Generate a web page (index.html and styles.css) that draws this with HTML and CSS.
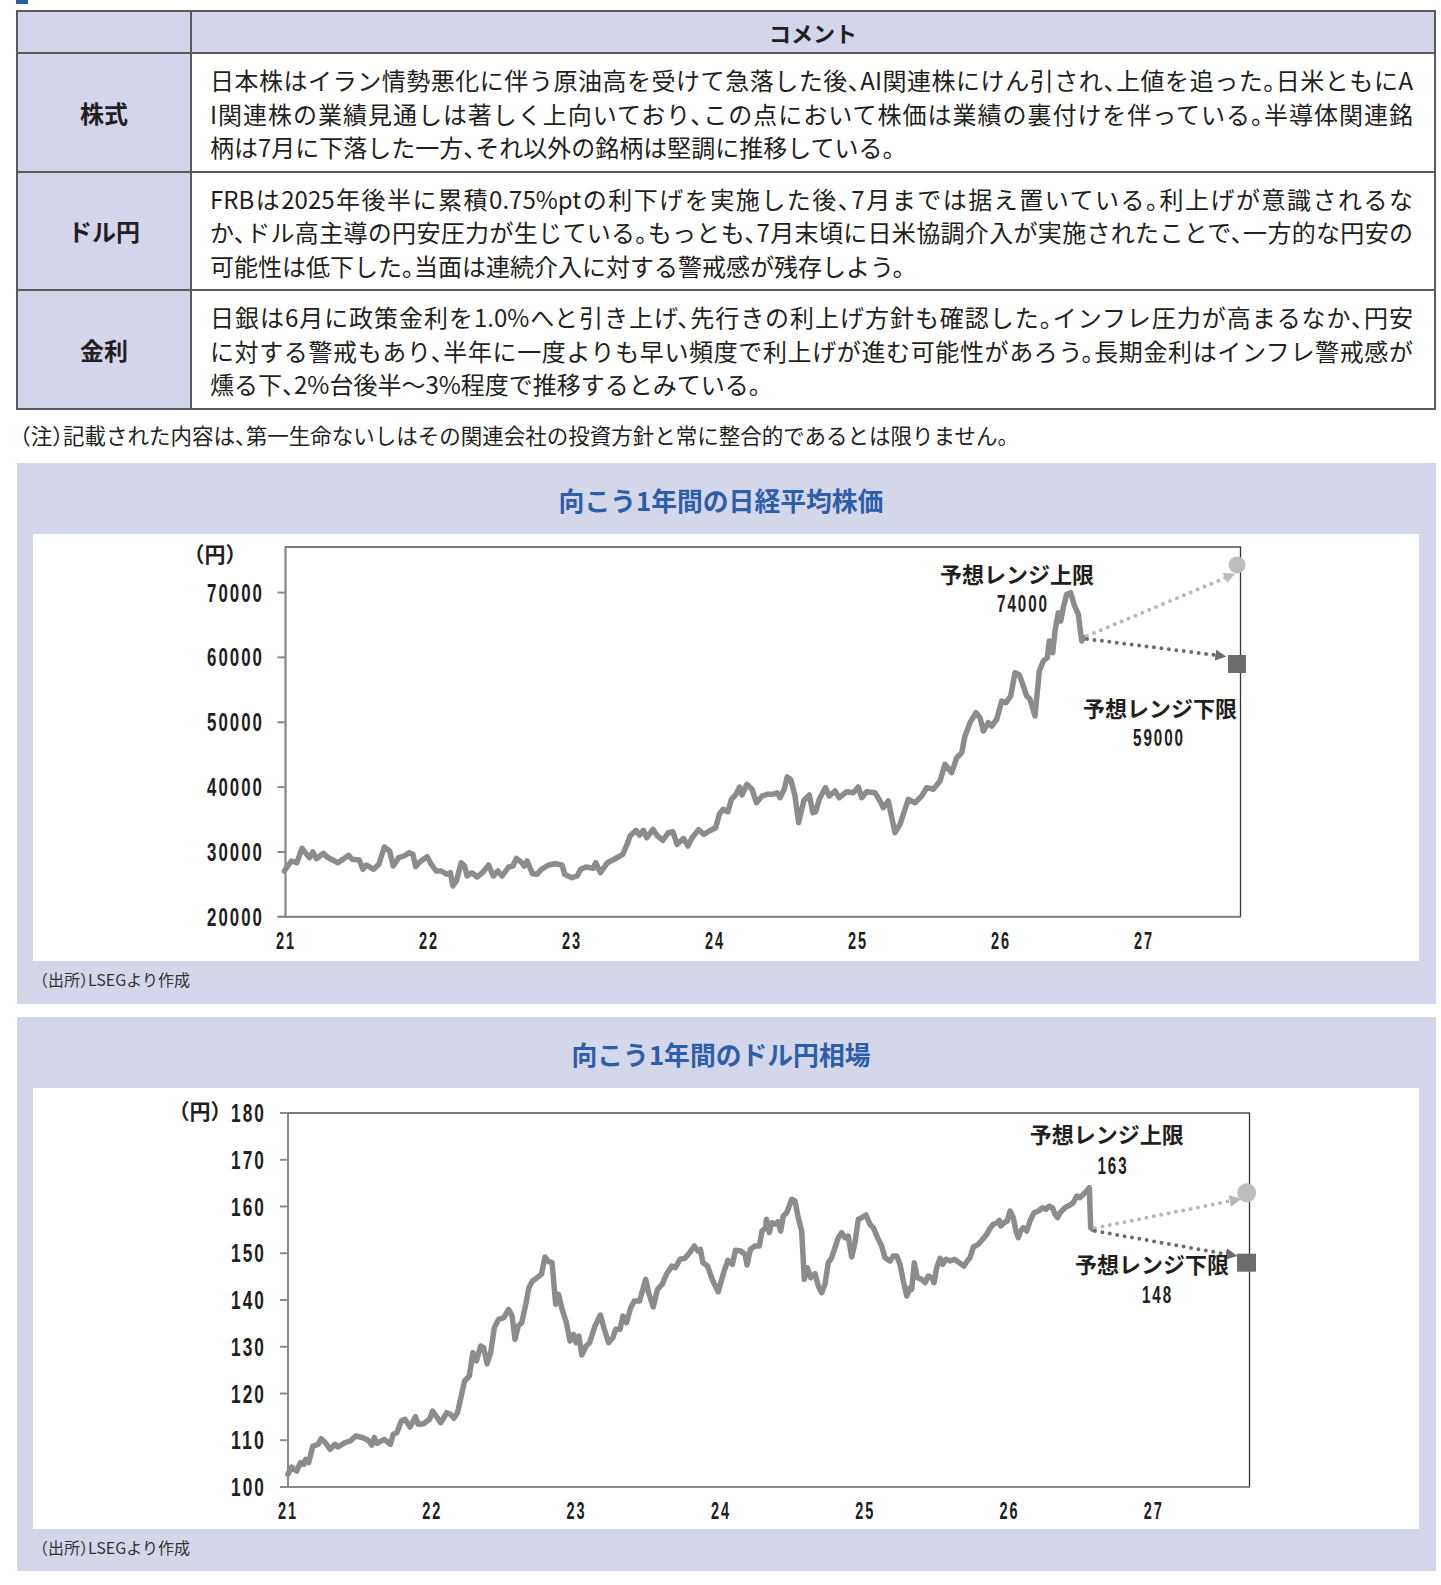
FILE: index.html
```html
<!DOCTYPE html>
<html lang="ja">
<head>
<meta charset="utf-8">
<title>見通し</title>
<link rel="stylesheet" href="styles.css">
</head>
<body>
<div class="page">
  <div class="mark"></div>
  <table class="outlook">
    <colgroup><col class="c1"><col></colgroup>
    <tr class="head"><th></th><th>コメント</th></tr>
    <tr>
      <th class="cat">株式</th>
      <td class="txt">
        <span class="ln">日本株はイラン情勢悪化に伴う原油高を受けて急落した後、AI関連株にけん引され、上値を追った。日米ともにA</span>
        <span class="ln">I関連株の業績見通しは著しく上向いており、この点において株価は業績の裏付けを伴っている。半導体関連銘</span>
        <span class="ln last">柄は7月に下落した一方、それ以外の銘柄は堅調に推移している。</span>
      </td>
    </tr>
    <tr>
      <th class="cat">ドル円</th>
      <td class="txt">
        <span class="ln">FRBは2025年後半に累積0.75%ptの利下げを実施した後、7月までは据え置いている。利上げが意識されるな</span>
        <span class="ln">か、ドル高主導の円安圧力が生じている。もっとも、7月末頃に日米協調介入が実施されたことで、一方的な円安の</span>
        <span class="ln last">可能性は低下した。当面は連続介入に対する警戒感が残存しよう。</span>
      </td>
    </tr>
    <tr>
      <th class="cat">金利</th>
      <td class="txt">
        <span class="ln">日銀は6月に政策金利を1.0%へと引き上げ、先行きの利上げ方針も確認した。インフレ圧力が高まるなか、円安</span>
        <span class="ln">に対する警戒もあり、半年に一度よりも早い頻度で利上げが進む可能性があろう。長期金利はインフレ警戒感が</span>
        <span class="ln last">燻る下、2%台後半〜3%程度で推移するとみている。</span>
      </td>
    </tr>
  </table>
  <p class="note">（注）記載された内容は、第一生命ないしはその関連会社の投資方針と常に整合的であるとは限りません。</p>

  <section class="panel">
    <h2 class="panel-title">向こう1年間の日経平均株価</h2>
    <div class="chart chart-nikkei">
      <svg width="1386" height="427" viewBox="0 0 1386 427">
        <defs>
          <marker id="ahL" viewBox="0 0 10 10" refX="7" refY="5" markerWidth="11" markerHeight="11" markerUnits="userSpaceOnUse" orient="auto"><path d="M0 0 L10 5 L0 10 Z" fill="#b9b9b9"/></marker>
          <marker id="ahD" viewBox="0 0 10 10" refX="7" refY="5" markerWidth="11" markerHeight="11" markerUnits="userSpaceOnUse" orient="auto"><path d="M0 0 L10 5 L0 10 Z" fill="#6d6d6d"/></marker>
        </defs>
        <rect class="frame" x="252.5" y="13" width="955" height="369.8"/>
        <g class="ticks">
          <line x1="244.5" y1="58.6" x2="252.5" y2="58.6"/>
          <line x1="244.5" y1="123.4" x2="252.5" y2="123.4"/>
          <line x1="244.5" y1="188.3" x2="252.5" y2="188.3"/>
          <line x1="244.5" y1="253.1" x2="252.5" y2="253.1"/>
          <line x1="244.5" y1="318" x2="252.5" y2="318"/>
          <line x1="244.5" y1="382.8" x2="252.5" y2="382.8"/>
        </g>
        <line class="axis" x1="252.5" y1="13" x2="252.5" y2="383.8"/>
        <line class="axis" x1="244.5" y1="382.8" x2="1207.5" y2="382.8"/>
        <text class="unit" x="182" y="28">（円）</text>
        <g class="ynum">
          <text x="231" y="67.6" textLength="57" lengthAdjust="spacingAndGlyphs">70000</text>
          <text x="231" y="132.4" textLength="57" lengthAdjust="spacingAndGlyphs">60000</text>
          <text x="231" y="197.3" textLength="57" lengthAdjust="spacingAndGlyphs">50000</text>
          <text x="231" y="262.1" textLength="57" lengthAdjust="spacingAndGlyphs">40000</text>
          <text x="231" y="327" textLength="57" lengthAdjust="spacingAndGlyphs">30000</text>
          <text x="231" y="391.8" textLength="57" lengthAdjust="spacingAndGlyphs">20000</text>
        </g>
        <g class="xnum">
          <text x="253" y="415" textLength="20" lengthAdjust="spacingAndGlyphs">21</text>
          <text x="396" y="415" textLength="20" lengthAdjust="spacingAndGlyphs">22</text>
          <text x="539" y="415" textLength="20" lengthAdjust="spacingAndGlyphs">23</text>
          <text x="682" y="415" textLength="20" lengthAdjust="spacingAndGlyphs">24</text>
          <text x="825" y="415" textLength="20" lengthAdjust="spacingAndGlyphs">25</text>
          <text x="968" y="415" textLength="20" lengthAdjust="spacingAndGlyphs">26</text>
          <text x="1111" y="415" textLength="20" lengthAdjust="spacingAndGlyphs">27</text>
        </g>
        <path class="series" d="M251.3 337 L258.4 327 L263.8 328.7 L269.1 314.3 L276.3 323.7 L279.9 318 L283.4 324.7 L290.6 319.3 L294.1 323 L304.9 328.7 L315.6 321.3 L319.1 325.3 L326.3 326 L329.9 335.3 L333.4 331 L340.6 335.3 L345.9 330.3 L351.3 313 L356.6 317 L360.2 332 L365.6 323.7 L370.9 322 L376.3 318.7 L379.9 320.3 L382.7 332.7 L387 327.7 L394.1 322.7 L397.7 329.3 L403.1 337 L408.4 337 L413.8 340.3 L417.4 338.7 L419.9 352 L423.4 347 L428.1 328.7 L431.6 332 L434.1 342 L438.8 338.7 L444.1 343 L449.5 338.7 L455.6 331 L460.2 342 L464.9 337 L469.1 342 L475.6 333 L479.9 332 L483.4 324.3 L488.8 328.7 L491.3 332 L494.1 327 L499.5 339.7 L504.1 340.3 L508.4 335.3 L515.6 331 L522 329.7 L529.1 331 L531.6 340.3 L538.8 343.7 L544.1 342 L547.7 335.3 L553.1 333 L560.2 334.3 L562.7 328.7 L567.4 338.7 L574.5 328.7 L579.9 326 L585.2 323 L589.9 320.3 L594.1 310.3 L597 302 L603.1 296.3 L606.6 301 L610.2 296.3 L613.8 303.7 L619.9 295.3 L624.5 302 L629.9 306.3 L635.2 298.7 L639.9 297.7 L644.1 310.3 L650.6 304.3 L654.9 312 L659.1 303.7 L665.6 295.7 L670.9 300.3 L676.3 297 L682.7 293.7 L686.3 280.3 L689.9 275.3 L694.9 277.7 L698.4 265.3 L703.1 260.3 L706.6 253 L709.1 261 L713.8 250.3 L719.1 255.3 L723.4 268.7 L729.1 262 L734.1 260.3 L739.9 260.3 L744.1 258.7 L747 263.7 L751.3 255.3 L754.1 243 L757.7 245.3 L762 262 L765.6 288.7 L770.9 266.3 L776.3 261 L779.9 278.7 L782.7 277.7 L786.3 265.3 L792.4 253.7 L796.3 262 L802 257 L806.3 263.7 L813.7 257.7 L820.3 258.7 L825.3 253 L828.7 263.7 L833.7 257.7 L842 258.7 L847 267 L850.3 273.7 L855.3 267 L862 298.7 L867 290.3 L875.3 265.3 L882 268.7 L888.7 262 L893.7 253.7 L900.3 255.3 L907 247 L912 230.3 L918.7 238.7 L923.7 223.7 L928.7 218.7 L932 202 L937 188.7 L943 178.7 L947 183.7 L950.3 197 L955.3 188.7 L958.7 192 L963.7 185.3 L968.7 167 L973 168.7 L977.7 162 L982 138.7 L986.3 141 L989.7 150.3 L993.7 162 L997 165.3 L1002 182 L1006.3 137 L1010.3 127 L1014.3 123.7 L1016.3 107 L1019.7 118.7 L1022 97 L1025.3 78.7 L1027.7 87 L1030.3 73.7 L1033.7 60.3 L1037.7 58.7 L1041 70.3 L1045.3 80.3 L1048.7 107 L1051 103.7"/>
        <line class="fc fc-hi" x1="1054" y1="102" x2="1199" y2="41" marker-end="url(#ahL)"/>
        <line class="fc fc-lo" x1="1054" y1="105" x2="1190" y2="122" marker-end="url(#ahD)"/>
        <circle class="mk-hi" cx="1204" cy="31" r="8.5"/>
        <rect class="mk-lo" x="1195" y="121" width="18" height="18"/>
        <text class="lbl" x="984" y="49">予想レンジ上限</text>
        <text class="anum" x="990" y="78" textLength="52" lengthAdjust="spacingAndGlyphs">74000</text>
        <text class="lbl" x="1127" y="183">予想レンジ下限</text>
        <text class="anum" x="1126" y="212" textLength="52" lengthAdjust="spacingAndGlyphs">59000</text>
      </svg>
    </div>
    <p class="source">（出所）LSEGより作成</p>
  </section>

  <section class="panel panel-fx">
    <h2 class="panel-title">向こう1年間のドル円相場</h2>
    <div class="chart chart-fx">
      <svg width="1386" height="441" viewBox="0 0 1386 441">
        <defs>
          <marker id="ahL2" viewBox="0 0 10 10" refX="7" refY="5" markerWidth="12" markerHeight="12" markerUnits="userSpaceOnUse" orient="auto"><path d="M0 0 L10 5 L0 10 Z" fill="#b9b9b9"/></marker>
          <marker id="ahD2" viewBox="0 0 10 10" refX="7" refY="5" markerWidth="12" markerHeight="12" markerUnits="userSpaceOnUse" orient="auto"><path d="M0 0 L10 5 L0 10 Z" fill="#6d6d6d"/></marker>
        </defs>
        <rect class="frame" x="255" y="25" width="961.5" height="374"/>
        <g class="ticks">
          <line x1="247" y1="25" x2="255" y2="25"/>
          <line x1="247" y1="71.75" x2="255" y2="71.75"/>
          <line x1="247" y1="118.5" x2="255" y2="118.5"/>
          <line x1="247" y1="165.25" x2="255" y2="165.25"/>
          <line x1="247" y1="212" x2="255" y2="212"/>
          <line x1="247" y1="258.75" x2="255" y2="258.75"/>
          <line x1="247" y1="305.5" x2="255" y2="305.5"/>
          <line x1="247" y1="352.25" x2="255" y2="352.25"/>
          <line x1="247" y1="399" x2="255" y2="399"/>
        </g>
        <line class="axis" x1="255" y1="25" x2="255" y2="400"/>
        <line class="axis" x1="247" y1="399" x2="1216.5" y2="399"/>
        <text class="unit" x="167" y="31">（円）</text>
        <g class="ynum">
          <text x="233" y="34" textLength="35" lengthAdjust="spacingAndGlyphs">180</text>
          <text x="233" y="80.75" textLength="35" lengthAdjust="spacingAndGlyphs">170</text>
          <text x="233" y="127.5" textLength="35" lengthAdjust="spacingAndGlyphs">160</text>
          <text x="233" y="174.25" textLength="35" lengthAdjust="spacingAndGlyphs">150</text>
          <text x="233" y="221" textLength="35" lengthAdjust="spacingAndGlyphs">140</text>
          <text x="233" y="267.75" textLength="35" lengthAdjust="spacingAndGlyphs">130</text>
          <text x="233" y="314.5" textLength="35" lengthAdjust="spacingAndGlyphs">120</text>
          <text x="233" y="361.25" textLength="35" lengthAdjust="spacingAndGlyphs">110</text>
          <text x="233" y="408" textLength="35" lengthAdjust="spacingAndGlyphs">100</text>
        </g>
        <g class="xnum">
          <text x="255" y="431" textLength="20" lengthAdjust="spacingAndGlyphs">21</text>
          <text x="399.3" y="431" textLength="20" lengthAdjust="spacingAndGlyphs">22</text>
          <text x="543.6" y="431" textLength="20" lengthAdjust="spacingAndGlyphs">23</text>
          <text x="687.9" y="431" textLength="20" lengthAdjust="spacingAndGlyphs">24</text>
          <text x="832.2" y="431" textLength="20" lengthAdjust="spacingAndGlyphs">25</text>
          <text x="976.5" y="431" textLength="20" lengthAdjust="spacingAndGlyphs">26</text>
          <text x="1120.8" y="431" textLength="20" lengthAdjust="spacingAndGlyphs">27</text>
        </g>
        <path class="series" d="M254.9 386.3 L258.4 379 L263.8 383 L267.4 374.7 L270.9 376.3 L272.7 371.3 L275.6 374.7 L279.9 358 L285.2 356.3 L288.1 350.7 L292.4 354.7 L297 361.3 L302 356.3 L304.9 359 L312 354.7 L317.4 353 L322.7 348 L329.9 349.7 L335.2 352.3 L338.8 357 L341.3 349.7 L344.1 355.3 L351.3 351.3 L357.4 356.3 L360.2 346.3 L363.8 344.7 L368.4 333 L372 331.3 L377 339 L382.4 328.7 L385.2 336.3 L390.6 335.7 L396.6 331.3 L399.5 323 L403.1 328 L407.7 334.7 L413.8 324.7 L417.4 326.3 L420.9 330.3 L424.5 324.7 L431.6 293 L436.3 288 L439.9 264.7 L443.4 273 L447.7 258 L450.6 259.7 L454.1 275.7 L457.7 264.7 L461.3 239.7 L465.6 231.3 L470.9 229.7 L475.6 221.3 L479.1 228 L482 251.3 L485.2 238 L488.8 234.7 L492.4 218 L495.9 199.7 L499.5 193 L504.1 189.7 L508.4 186.3 L512 169 L515.6 173.7 L519.1 174.7 L522.7 216.3 L525.6 206.3 L529.1 221.3 L533.4 234.7 L537 253 L540.6 246.3 L543.1 254.7 L545.9 248 L548.8 267 L553.1 258 L556.6 254.7 L562 238 L567.4 227 L570.9 239.7 L575.6 254.7 L579.9 249.7 L582.7 241.3 L587 241.3 L589.9 228 L593.4 234.7 L597.7 219.7 L601.3 213 L606.6 213 L612.7 191.3 L615.6 204.7 L620.2 219 L624.5 201.3 L629.1 196.3 L633.4 186.3 L638.8 178 L642.4 179.7 L647 171.3 L652 170.3 L656.6 164.7 L661.3 158 L664.9 163 L667.4 161.3 L669.9 174.7 L674.5 178 L679.9 193 L685.2 203.7 L690.6 184.7 L694.9 172.3 L699.5 176.3 L702.4 162.3 L707.7 163 L712 166.3 L714.1 177 L717.4 161.3 L722 158 L726.3 158 L729.1 143 L732.7 139.7 L733.4 131.3 L736.3 144.7 L738.8 134.7 L743.4 136.3 L744.9 133.7 L747.7 143 L750.3 128 L753.7 124.7 L758.7 111.3 L762 113 L765.3 129.7 L768.7 143 L771.3 191.3 L774.3 179.7 L777.7 189.7 L782 185.7 L785.3 198 L788.7 204.7 L792 196.3 L795.3 174.7 L798.7 169.7 L802 159.7 L805.3 149.7 L808.7 144.7 L812 149.7 L815.3 148 L818.7 169 L822 154.7 L825.3 131.3 L828.7 129.7 L833 127 L837 136.3 L840.3 139.7 L845.3 151.3 L848.7 158 L852 169.7 L857 173 L860.3 168 L863.7 168 L867 176.3 L870.3 193 L873.7 208 L877 199.7 L878.7 201.3 L881.3 174.7 L884.3 189.7 L888.7 191.3 L892 194.7 L895.3 188 L898.7 189.7 L901 194.7 L903.7 179.7 L907 170.3 L909.7 176.3 L913 171.3 L917 173 L921.3 171.3 L926.3 174.7 L931 178 L934.3 173 L937 169.7 L940.3 159 L945.3 156.3 L949.7 151.3 L953.7 146.3 L957 140.3 L960.3 136.3 L964.3 134.7 L966.3 132.3 L967.7 138 L971 134.7 L974.3 133 L977 123 L980.3 129.7 L983 143 L985.3 149.7 L987.7 143 L990.3 139.7 L993.7 143 L997 133 L1001 124.7 L1005.3 123 L1009.7 119.7 L1013 121.3 L1016.3 118 L1019.7 120.3 L1022 126.3 L1024.7 129.7 L1027 124.7 L1032 119.7 L1037 117 L1040.3 114.7 L1043.7 108 L1047 109.7 L1050.3 106.3 L1053.7 103 L1056.3 99.7 L1057.7 139.7 L1059.7 141.3"/>
        <line class="fc fc-hi" x1="1062" y1="140" x2="1205" y2="111.5" marker-end="url(#ahL2)"/>
        <line class="fc fc-lo" x1="1062" y1="143" x2="1201" y2="167.5" marker-end="url(#ahD2)"/>
        <circle class="mk-hi" cx="1213.7" cy="104.7" r="9.5"/>
        <rect class="mk-lo" x="1204" y="165.7" width="19" height="18"/>
        <text class="lbl" x="1073.7" y="55">予想レンジ上限</text>
        <text class="anum" x="1080" y="86" textLength="31" lengthAdjust="spacingAndGlyphs">163</text>
        <text class="lbl" x="1119" y="185">予想レンジ下限</text>
        <text class="anum" x="1124.5" y="215" textLength="31" lengthAdjust="spacingAndGlyphs">148</text>
      </svg>
    </div>
    <p class="source">（出所）LSEGより作成</p>
  </section>
</div>
</body>
</html>
```

FILE: styles.css
```css
html, body {
  margin: 0;
  padding: 0;
  background: #ffffff;
}

body {
  font-family: "Noto Sans CJK JP", "Noto Sans", sans-serif;
  color: #231f20;
}

.page {
  width: 1441px;
}

.mark {
  width: 12px;
  height: 4px;
  margin-left: 16px;
  background: #2d5ea8;
}

/* ---------- comment table ---------- */
.outlook {
  margin: 6px 0 0 16px;
  width: 1420px;
  border-collapse: collapse;
  table-layout: fixed;
}

.outlook .c1 {
  width: 174px;
}

.outlook th,
.outlook td {
  border: 2px solid #5a5a5a;
}

.outlook .head th {
  height: 40px;
  padding: 0;
  background: #d3d6ea;
  font-size: 22px;
  font-weight: 700;
  text-align: center;
  vertical-align: middle;
}

.outlook .cat {
  background: #d3d6ea;
  font-size: 24px;
  font-weight: 700;
  text-align: center;
  vertical-align: middle;
  padding: 0;
}

.outlook .txt {
  padding: 9px 21px 7px 18px;
  font-size: 24px;
  line-height: 33.5px;
  font-feature-settings: "halt";
  vertical-align: top;
}

.ln {
  display: block;
  text-align: justify;
  text-align-last: justify;
}

.ln.last {
  text-align-last: left;
}

.note {
  margin: 11px 0 0 20px;
  font-size: 21.5px;
  line-height: 28px;
  font-feature-settings: "halt";
}

/* ---------- chart panels ---------- */
.panel {
  margin: 14px 0 0 17px;
  width: 1419px;
  box-sizing: border-box;
  padding: 0 17px 0 16px;
  background: #d4d7ea;
}

.panel-fx {
  margin-top: 13px;
}

.panel-title {
  margin: 0;
  height: 71px;
  box-sizing: border-box;
  padding: 3px 10px 0 0;
  display: flex;
  align-items: center;
  justify-content: center;
  font-size: 25.8px;
  font-weight: 700;
  color: #2d5ea8;
}

.chart {
  background: #ffffff;
}

.chart svg {
  display: block;
}

.source {
  margin: 0;
  height: 43px;
  padding-left: 7px;
  font-size: 16px;
  line-height: 36px;
  font-feature-settings: "halt";
  color: #333333;
}

.panel-fx .source {
  height: 42px;
}

/* ---------- svg chart parts ---------- */
.frame {
  fill: none;
  stroke: #333333;
  stroke-width: 1.3;
}

.axis,
.ticks line {
  stroke: #8a8a8a;
  stroke-width: 2;
}

.series {
  fill: none;
  stroke: #8c8c8c;
  stroke-width: 5.5;
  stroke-linejoin: round;
  stroke-linecap: round;
}

.fc {
  fill: none;
  stroke-width: 4;
  stroke-linecap: round;
  stroke-dasharray: 0 7.5;
}

.fc-hi {
  stroke: #b9b9b9;
}

.fc-lo {
  stroke: #6d6d6d;
}

.mk-hi {
  fill: #bdbdbd;
}

.mk-lo {
  fill: #6d6d6d;
}

.ynum text,
.xnum text,
.anum {
  font-family: "Liberation Sans", Arial, sans-serif;
  font-weight: 700;
  letter-spacing: 3px;
  fill: #231f20;
}

.ynum text {
  font-size: 25px;
  text-anchor: end;
}

.xnum text {
  font-size: 23px;
  text-anchor: middle;
}

.anum {
  font-size: 24px;
  text-anchor: middle;
}

.unit {
  font-family: "Noto Sans CJK JP", sans-serif;
  font-size: 21px;
  font-weight: 700;
  font-feature-settings: "halt";
  text-anchor: middle;
  fill: #231f20;
}

.lbl {
  font-family: "Noto Sans CJK JP", sans-serif;
  font-size: 22px;
  font-weight: 700;
  text-anchor: middle;
  fill: #231f20;
}
```
